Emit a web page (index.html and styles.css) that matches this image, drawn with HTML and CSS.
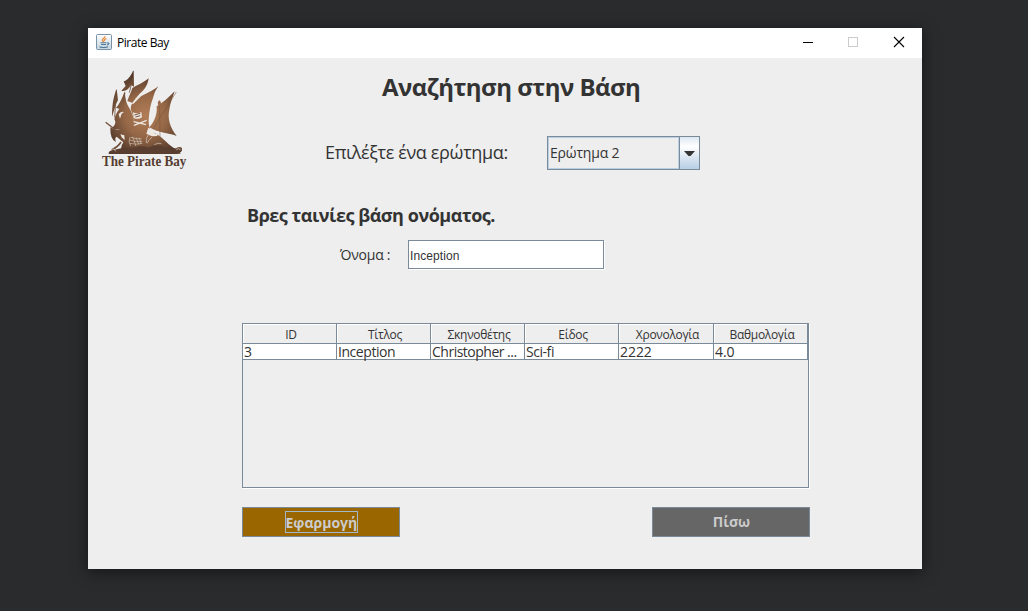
FILE: index.html
```html
<!DOCTYPE html>
<html lang="el">
<head>
<meta charset="utf-8">
<title>Pirate Bay</title>
<link rel="stylesheet" href="styles.css">
</head>
<body>
<div class="window">
  <header class="titlebar">
    <svg class="java" width="16" height="16" viewBox="0 0 16 16">
      <defs><linearGradient id="jg" x1="0" y1="0" x2="0" y2="1"><stop offset="0" stop-color="#fff"/><stop offset="1" stop-color="#c3d3df"/></linearGradient></defs>
      <rect x=".5" y=".5" width="15" height="15" rx="1" fill="url(#jg)" stroke="#7893a8"/>
      <path d="M9 2.200C9.300 4 6.200 4.600 6.400 6.200 6.500 7 7.500 7.500 7.600 8.300M10.500 4.500C8.500 5.300 8 6 8.700 7" fill="none" stroke="#ee8a33" stroke-width="1.300"/>
      <path d="M4.500 8.800h6M5 10.500h5M3.500 12.700c2 .9 6 .9 8.500 0M11 9c2.500-.8 2.500 1.500 0 2" fill="none" stroke="#557b98" stroke-width="1.100"/>
    </svg>
    <span class="caption">Pirate Bay</span>
    <svg class="controls" width="138" height="30" viewBox="0 0 138 30">
      <path d="M19 14.500h10" stroke="#000"/>
      <rect x="64.500" y="9.500" width="9" height="9" fill="none" stroke="#ccc"/>
      <path d="M110 9l10 10M120 9l-10 10" stroke="#000" stroke-width="1.100"/>
    </svg>
  </header>
  <div class="content">
    <aside class="side">
      <svg width="100" height="110" viewBox="0 0 300 330">
        <defs><radialGradient id="ship" gradientUnits="userSpaceOnUse" cx="155" cy="155" r="125"><stop offset="0" stop-color="#b27d57"/><stop offset=".5" stop-color="#966847"/><stop offset="1" stop-color="#553a2b"/></radialGradient></defs>
        <g fill="url(#ship)">
          <path d="M117 20C110 38 99 49 89 52L95 66 82 80C94 84 105 74 111 63L120 68 119 20Z"/>
          <path d="M164 43C146 58 124 66 115 72 112 85 105 94 100 111L118 118C124 102 135 91 146 81Q161 66 164 43Z"/>
          <path d="M193 66C175 82 152 90 140 97 123 106 105 121 112 141 119 155 121 174 115 205L175 207Q163 190 164 168 166 130 176 105 180 84 193 66Z"/>
          <path d="M242 82C224 101 204 117 188 127 191 154 178 177 166 190 190 207 223 206 248 216 228 190 220 166 226 136 229 116 236 101 242 82Z"/>
          <path d="M92 82C84 104 76 121 66 132L76 134C66 148 63 158 61 166 67 174 64 185 52 193 75 200 96 196 115 205 125 183 119 153 106 132 97 119 94 104 92 82Z"/>
          <path d="M68 75C60 95 54 115 54 158 61 139 64 122 72 108Z"/>
          <path d="M49 190Q65 204 82 194C101 193 115 205 130 202L176 204C202 215 220 240 238 251 250 257 254 248 263 253 267 263 258 267 249 270L44 270C43 262 50 257 62 261 77 266 83 253 83 244L88 235 68 218Q61 222 66 234 48 228 49 190Z"/>
          <path d="M196 109q-8 6-2 17l-3 75h7l1-75q5-11-3-17Z"/>
        </g>
        <g fill="none" stroke="#72503a">
          <path d="M35 175L80 210" stroke-width="4"/>
          <path d="M117 42L106 86M93 86L88 114M67 78L62 160" stroke-width="2.500"/>
          <path d="M178 193L247 84M197 126L198 222" stroke-width="1.500"/>
          <path d="M52 258Q72 249 81 234M240 266Q250 246 263 254" stroke-width="5"/>
        </g>
        <g fill="#eee8e2">
          <path d="M117 145Q130 151 142 144L144 160Q132 168 119 162Z"/>
          <path d="M147 91L126 102 114 118 117 121 132 106Z"/>
          <path d="M74 151Q80 140 90 144L83 149 78 164Z"/>
          <path d="M163 191Q178 197 183 209L190 207 190 216 174 217 157 209Z"/>
          <path d="M79 211L91 214 92 229 83 220Z"/>
        </g>
        <path d="M121 153l18-5M124 159l15-4" stroke="#79523c" stroke-width="3"/>
        <path d="M119 173L156 182M120 184L158 169" stroke="#ebe5df" stroke-width="4"/>
        <path d="M108 219q-6 15 2 27M111 220q14 7 32 4M107 228q19 8 38 4M107 238q20 5 38 0M116 218l10 29M126 220l9 22M136 221l5 18" fill="none" stroke="#cfc2b5" stroke-width="2"/>
        <path d="M164 211q-10 12-7 26M174 220q-10 5-14 18M202 239q-11-4-21 3" fill="none" stroke="#d9cdc2" stroke-width="2"/>
        <path d="M55 259Q87 250 110 253 138 242 164 251 190 237 214 251 236 261 251 255L260 269H45Z" fill="#5a3f30"/>
        <path d="M50 258q11-7 15 4M247 257q7-6 13 1" fill="none" stroke="#e6e0d9" stroke-width="2"/>
        <text class="logo-text" x="24" y="306" textLength="253" lengthAdjust="spacingAndGlyphs">The Pirate Bay</text>
      </svg>
    </aside>
    <main class="main">
      <h1 class="title"><span>Αναζήτηση στην Βάση</span></h1>
      <div class="query">
        <label class="query-label">Επιλέξτε ένα ερώτημα:</label>
        <div class="combo"><span class="combo-value">Ερώτημα 2</span><span class="combo-button"><svg width="11" height="6" viewBox="0 0 11 6"><path d="M0 0h11L6.500 5h-2Z" fill="#333"/></svg></span></div>
      </div>
      <h2 class="subtitle"><span>Βρες ταινίες βάση ονόματος.</span></h2>
      <div class="name-row">
        <label class="name-label">Όνομα :</label>
        <div class="field">Inception</div>
      </div>
      <div class="table-pane">
        <div class="grid head"><span>ID</span><span>Τίτλος</span><span>Σκηνοθέτης</span><span>Είδος</span><span>Χρονολογία</span><span>Βαθμολογία</span></div>
        <div class="grid data"><span>3</span><span>Inception</span><span>Christopher ...</span><span>Sci-fi</span><span>2222</span><span>4.0</span></div>
      </div>
      <div class="buttons">
        <div class="button apply"><span class="focus">Εφαρμογή</span></div>
        <div class="button back"><span>Πίσω</span></div>
      </div>
    </main>
  </div>
</div>
</body>
</html>
```
FILE: styles.css
```css
* { box-sizing: border-box; }
body { margin: 0; height: 611px; padding: 28px 0 0 88px; overflow: hidden; background: #2a2b2d; color: #333; font-family: "Open Sans", "Noto Sans", sans-serif; }
.window { width: 834px; height: 541px; background: #eee; box-shadow: 0 3px 14px rgba(0,0,0,.5); }
.titlebar { display: flex; height: 30px; background: #fff; color: #000; }
.java { margin: 6px 5px 0 8px; }
.caption { flex: 1; font-size: 12px; line-height: 30px; letter-spacing: -.45px; }
.content { display: flex; }
.side { width: 154px; padding: 6px 0 0 6px; }
.logo-text { font: bold 41px "Liberation Serif", serif; fill: #553d30; }
.main { width: 568px; padding-top: 11px; white-space: nowrap; }
.title { margin: 0; padding-left: 140px; font-size: 24px; line-height: 36px; font-weight: 700; letter-spacing: -.53px; }
.query { display: flex; margin-top: 31px; padding-left: 83px; }
.query-label { width: 222px; font-size: 18px; line-height: 32px; letter-spacing: -.35px; }
.combo { display: flex; width: 153px; height: 34px; border: 1px solid #7a8a99; }
.combo-value { flex: 1; border: 1px solid #b8cfe5; padding-left: 1px; font-size: 14px; line-height: 29px; letter-spacing: -.2px; }
.combo-button { display: flex; align-items: center; justify-content: center; width: 20px; padding-top: 1px; border-left: 1px solid #7a8a99; background: linear-gradient(#dde8f3, #fff 30%, #dde8f3 60%, #b8cfe5); }
.subtitle { margin: 31px 0 0; padding-left: 5px; font-size: 18px; line-height: 28px; letter-spacing: -.46px; }
.name-row { display: flex; height: 29px; margin-top: 11px; padding-left: 98px; }
.name-label { width: 68px; font-size: 14px; line-height: 30px; letter-spacing: -.25px; }
.field { width: 196px; height: 29px; padding-left: 1px; border: 1px solid #7a8a99; background: #fff; box-shadow: 1px 1px #fff; font: 12px/30px "Liberation Sans", sans-serif; letter-spacing: .1px; }
.table-pane { width: 567px; height: 165px; margin-top: 54px; border: 1px solid #7a8a99; box-shadow: 1px 1px #fff; }
.grid { display: grid; grid-template-columns: 94px 94px 94px 94px 95px 94px; }
.grid span { border-right: 1px solid #7a8a99; border-bottom: 1px solid #7a8a99; }
.head span { height: 20px; box-shadow: inset 1px 1px #fff; font-size: 12px; line-height: 22px; text-align: center; padding-left: 3px; letter-spacing: -.3px; }
.data span { height: 16px; padding-left: 1px; background: #fff; font-size: 14px; line-height: 16px; letter-spacing: -.45px; }
.data span:nth-child(3) { letter-spacing: -.5px; }
.data span:nth-child(n+5) { letter-spacing: -.05px; }
.buttons { display: flex; justify-content: space-between; margin-top: 19px; }
.button { display: flex; align-items: center; justify-content: center; width: 158px; height: 30px; border: 1px solid #7a8a99; color: #ccc; font-size: 14px; font-weight: 700; line-height: 20px; }
.apply { background: #960; }
.back { background: #666; padding-left: 1px; }
.focus { width: 73px; height: 22px; border: 1px solid #a3b8cc; line-height: 21px; }
```
